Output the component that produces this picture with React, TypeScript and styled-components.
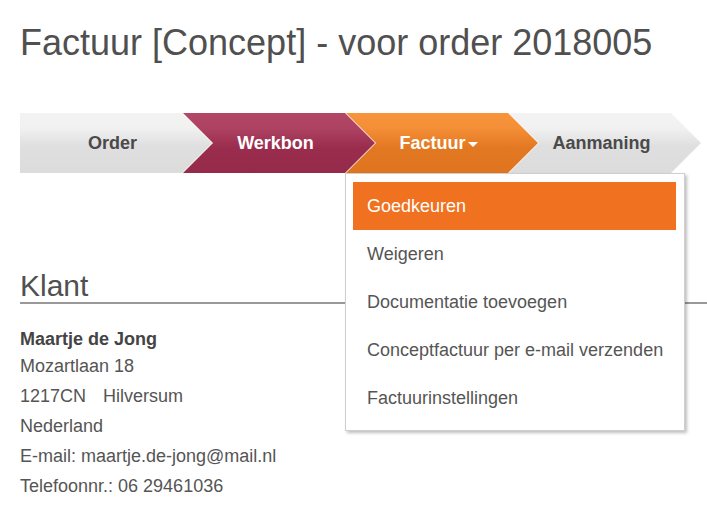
import React from "react";
import styled, {createGlobalStyle, css} from "styled-components";

const GlobalStyle = createGlobalStyle`
    body {
        margin: 0;
        background: #fff;
        font-family: "Liberation Sans", Arial, sans-serif;
        color: #555;
    }
`

const Page = styled.div`
    padding: 0 0 20px 20px;
`

const Title = styled.h1`
    margin: 23px 0 0;
    font-size: 36px;
    font-weight: normal;
    line-height: 40px;
    color: #505050;
`

const Steps = styled.div`
    display: flex;
    flex-direction: row;
    margin-top: 50px;
    height: 60px;
`

const StepItem = styled.div`
    position: relative;
    width: 192px;
    height: 100%;
    flex: none;

    & + & {
        margin-left: -29px;
    }
`

type Tone = "grey" | "wine" | "orange";

const toneCss = {
    grey: css`
        background: linear-gradient(to bottom, #f3f3f3 0%, #f1f1f1 25%, #dfdfdf 55%, #dcdcdc 100%);
        color: #4a4a4a;
    `,
    wine: css`
        background: linear-gradient(to bottom, #b24767 0%, #ae4262 25%, #9a2d4e 58%, #962a4a 100%);
        color: #fff;
    `,
    orange: css`
        background: linear-gradient(to bottom, #f7943c 0%, #f48f37 25%, #e37822 58%, #e0741f 100%);
        color: #fff;
    `,
}

const StepShape = styled.div<{ $tone: Tone; $first?: boolean }>`
    display: flex;
    align-items: center;
    justify-content: center;
    height: 100%;
    padding-right: 7px;
    box-sizing: border-box;
    font-size: 18px;
    font-weight: bold;
    ${props => toneCss[props.$tone]}
    clip-path: ${props => props.$first
        ? "polygon(0 0, 162px 0, 192px 50%, 162px 100%, 0 100%)"
        : "polygon(0 0, 162px 0, 192px 50%, 162px 100%, 0 100%, 30px 50%)"};
`

const Caret = styled.span`
    display: inline-block;
    width: 0;
    height: 0;
    margin-left: 2px;
    margin-top: 2px;
    border-left: 5px solid transparent;
    border-right: 5px solid transparent;
    border-top: 5px solid #fff;
`

const Menu = styled.div`
    position: absolute;
    z-index: 10;
    top: 100%;
    left: -1px;
    width: 340px;
    box-sizing: border-box;
    padding: 8px 8px 8px 7px;
    background: #fff;
    border: 1px solid #cfcfcf;
    box-shadow: 2px 2px 3px rgba(0, 0, 0, 0.25);
`

const MenuItem = styled.div<{ $active?: boolean }>`
    display: flex;
    align-items: center;
    height: 48px;
    padding-left: 14px;
    font-size: 18px;
    color: ${props => props.$active ? "#fff" : "#555"};
    background: ${props => props.$active ? "#f07220" : "transparent"};
`

const Section = styled.section`
    margin-top: 96px;
`

const SectionTitle = styled.h2`
    margin: 0;
    font-size: 30px;
    font-weight: normal;
    line-height: 33px;
    color: #505050;
    border-bottom: 2px solid #999;
`

const Contact = styled.div`
    margin-top: 23px;
    font-size: 18px;
    line-height: 30px;
    color: #555;
`

const ContactName = styled.div`
    line-height: 24px;
    font-weight: bold;
    color: #444;
`

const City = styled.span`
    margin-left: 17px;
`

const menuItems = [
    "Goedkeuren",
    "Weigeren",
    "Documentatie toevoegen",
    "Conceptfactuur per e-mail verzenden",
    "Factuurinstellingen",
]

export default function App() {
    return (
        <Page>
            <GlobalStyle/>
            <Title>Factuur [Concept] - voor order 2018005</Title>
            <Steps>
                <StepItem>
                    <StepShape $tone="grey" $first>Order</StepShape>
                </StepItem>
                <StepItem>
                    <StepShape $tone="wine">Werkbon</StepShape>
                </StepItem>
                <StepItem>
                    <StepShape $tone="orange">Factuur<Caret/></StepShape>
                    <Menu>
                        {menuItems.map((item, i) => (
                            <MenuItem key={item} $active={i === 0}>{item}</MenuItem>
                        ))}
                    </Menu>
                </StepItem>
                <StepItem>
                    <StepShape $tone="grey">Aanmaning</StepShape>
                </StepItem>
            </Steps>
            <Section>
                <SectionTitle>Klant</SectionTitle>
                <Contact>
                    <ContactName>Maartje de Jong</ContactName>
                    <div>Mozartlaan 18</div>
                    <div>1217CN<City>Hilversum</City></div>
                    <div>Nederland</div>
                    <div>E-mail: maartje.de-jong@mail.nl</div>
                    <div>Telefoonnr.: 06 29461036</div>
                </Contact>
            </Section>
        </Page>
    )
}
